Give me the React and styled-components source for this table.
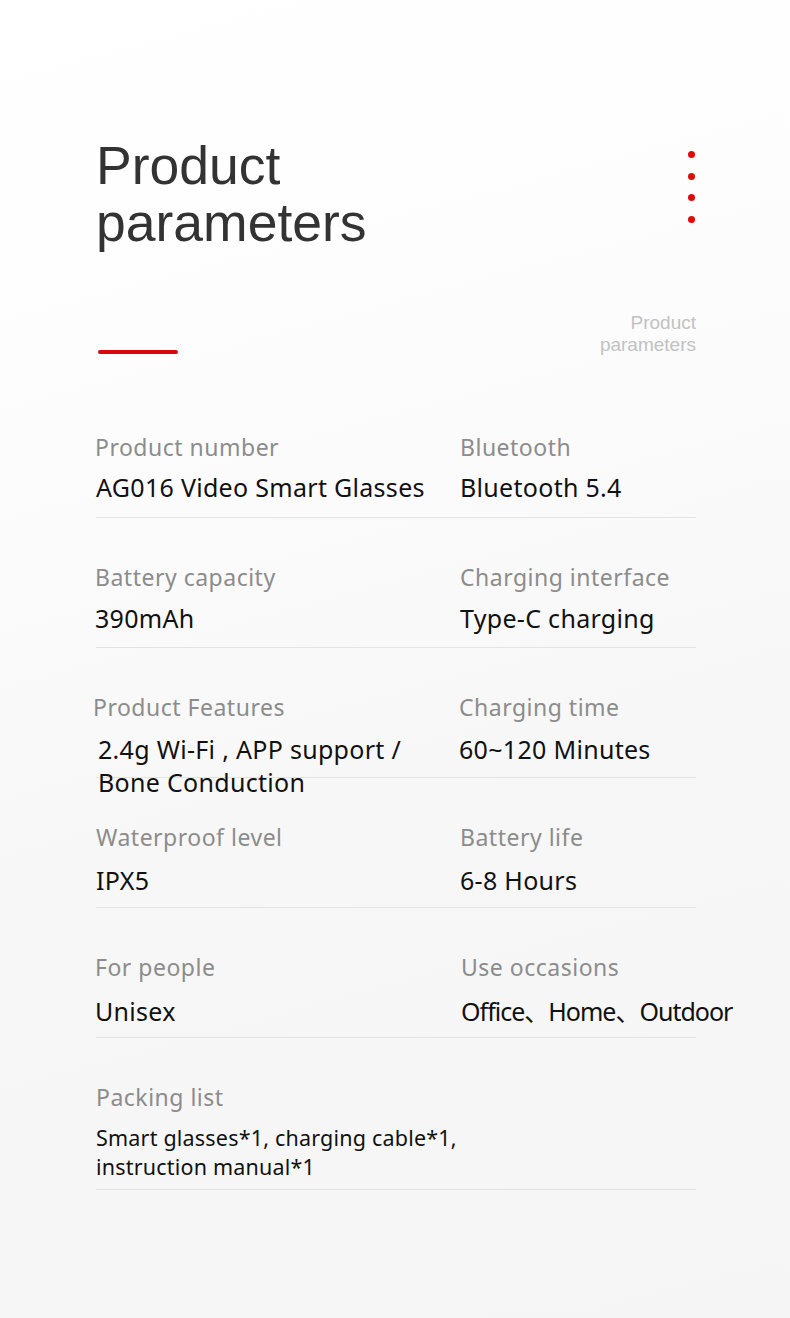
import React from "react";
import styled, { createGlobalStyle } from "styled-components";

const Global = createGlobalStyle`
  html, body { margin: 0; padding: 0; }
  body { background: #f5f5f5; }
`;

const Page = styled.div`
  box-sizing: border-box;
  width: 790px;
  min-height: 1318px;
  padding: 0 94px 0 96px;
  background: linear-gradient(165deg, #ffffff 0%, #fdfdfd 25%, #f7f7f7 60%, #f5f5f5 100%);
  overflow: hidden;
`;

const Header = styled.header`
  display: flex;
  justify-content: space-between;
  align-items: flex-start;
  padding-top: 137px;
`;

const TitleBlock = styled.div`
  display: flex;
  flex-direction: column;
`;

const Title = styled.h1`
  margin: 0;
  font-family: "Liberation Sans", Arial, sans-serif;
  font-weight: 400;
  font-size: 53.5px;
  line-height: 57px;
  color: #333333;
`;

const RedBar = styled.div`
  width: 80px;
  height: 4px;
  margin: 99px 0 0 2px;
  border-radius: 2px;
  background: #d9070f;
`;

const Side = styled.div`
  display: flex;
  flex-direction: column;
  align-items: flex-end;
  padding-top: 14px;
`;

const Dots = styled.div`
  display: flex;
  flex-direction: column;
  gap: 14.5px;
  margin-right: 1px;
`;

const Dot = styled.span`
  display: block;
  width: 7px;
  height: 7px;
  border-radius: 50%;
  background: #e00a0a;
`;

const SubTitle = styled.div`
  margin-top: 89px;
  font-family: "Liberation Sans", Arial, sans-serif;
  font-size: 19px;
  line-height: 22px;
  color: #c2c2c2;
  text-align: right;
`;

const Specs = styled.section`
  margin-top: 32px;
`;

const Row = styled.div`
  display: grid;
  grid-template-columns: 364px 1fr;
  height: ${p => (p.$auto ? "auto" : "129px")};
  padding-bottom: ${p => (p.$auto ? "8px" : "0")};
  border-bottom: 1px solid #e3e3e3;
`;

const Cell = styled.div`
  display: flex;
  flex-direction: column;
  padding-top: 44px;
  grid-column: ${p => (p.$full ? "1 / -1" : "auto")};
  margin-left: ${p => p.$dx || 0}px;
`;

const Label = styled.div`
  font-family: "Noto Sans", "Open Sans", sans-serif;
  font-size: 23px;
  letter-spacing: 0.5px;
  line-height: 30px;
  color: #8c8c8c;
  white-space: nowrap;
`;

const Value = styled.div`
  margin-top: ${p => p.$gap}px;
  margin-left: ${p => p.$dx || 0}px;
  font-family: "Noto Sans", "Open Sans", "Noto Sans CJK SC", sans-serif;
  font-size: ${p => (p.$small ? "21.5px" : "25px")};
  letter-spacing: ${p => (p.$small ? "0.2px" : p.$tight ? "-1px" : "0.3px")};
  line-height: ${p => (p.$small ? "29px" : "33px")};
  color: #111111;
  white-space: ${p => (p.$wrap ? "normal" : "nowrap")};
  max-width: ${p => (p.$wrap ? "340px" : "none")};
`;

const rows = [
  {
    gap: 9,
    cells: [
      { label: "Product number", value: "AG016 Video Smart Glasses", dx: -1, vdx: 1 },
      { label: "Bluetooth", value: "Bluetooth 5.4" },
    ],
  },
  {
    gap: 10,
    cells: [
      { label: "Battery capacity", value: "390mAh", dx: -1 },
      { label: "Charging interface", value: "Type-C charging" },
    ],
  },
  {
    gap: 11,
    cells: [
      { label: "Product Features", value: "2.4g Wi-Fi , APP support / Bone Conduction", dx: -3, vdx: 5, wrap: true },
      { label: "Charging time", value: "60~120 Minutes", dx: -1 },
    ],
  },
  {
    gap: 12,
    cells: [
      { label: "Waterproof level", value: "IPX5" },
      { label: "Battery life", value: "6-8 Hours" },
    ],
  },
  {
    gap: 13,
    cells: [
      { label: "For people", value: "Unisex", dx: -1 },
      { label: "Use occasions", value: "Office、Home、Outdoor", dx: 1, tight: true },
    ],
  },
];

export default function App() {
  return (
    <>
      <Global />
      <Page>
        <Header>
          <TitleBlock>
            <Title>
              Product
              <br />
              parameters
            </Title>
            <RedBar />
          </TitleBlock>
          <Side>
            <Dots>
              <Dot />
              <Dot />
              <Dot />
              <Dot />
            </Dots>
            <SubTitle>
              Product
              <br />
              parameters
            </SubTitle>
          </Side>
        </Header>
        <Specs>
          {rows.map((r, i) => (
            <Row key={i}>
              {r.cells.map((c, j) => (
                <Cell key={j} $dx={c.dx}>
                  <Label>{c.label}</Label>
                  <Value $gap={r.gap} $dx={c.vdx} $wrap={c.wrap} $tight={c.tight}>
                    {c.value}
                  </Value>
                </Cell>
              ))}
            </Row>
          ))}
          <Row $auto>
            <Cell $full>
              <Label>Packing list</Label>
              <Value $small $gap={11}>
                Smart glasses*1, charging cable*1,
                <br />
                instruction manual*1
              </Value>
            </Cell>
          </Row>
        </Specs>
      </Page>
    </>
  );
}
